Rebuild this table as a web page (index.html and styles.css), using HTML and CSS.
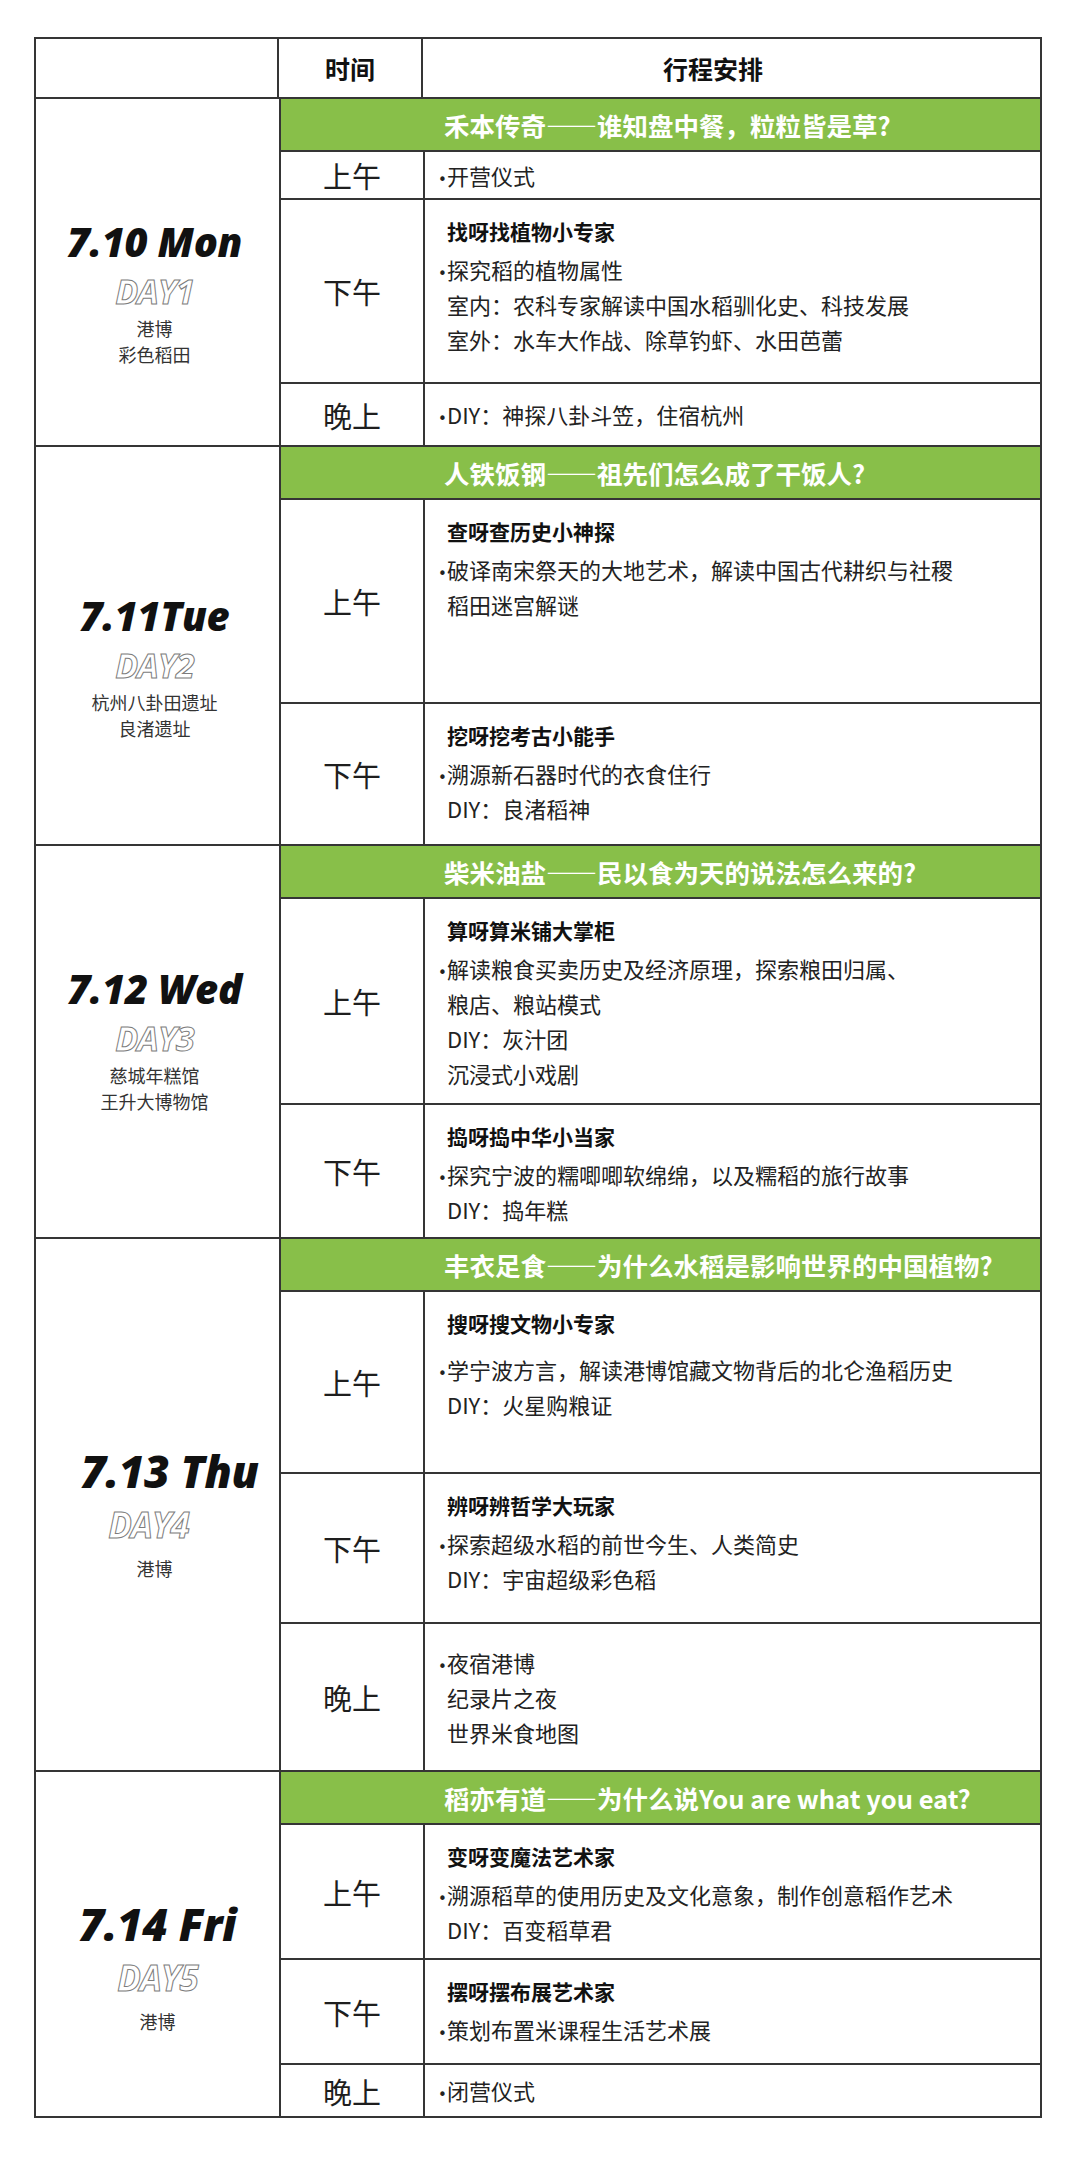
FILE: index.html
```html
<!DOCTYPE html>
<html lang="zh-CN">
<head>
<meta charset="utf-8">
<title>行程安排</title>
<link rel="stylesheet" href="styles.css">
</head>
<body>
<div class="table">
  <div class="header">
    <div class="hc1"></div>
    <div class="hc2">时间</div>
    <div class="hc3">行程安排</div>
  </div>

  <section class="day day1">
    <div class="day-label">
      <div class="date">7.10 Mon</div>
      <div class="dayno">DAY1</div>
      <div class="loc">港博</div>
      <div class="loc">彩色稻田</div>
    </div>
    <div class="day-body">
      <div class="theme">禾本传奇——谁知盘中餐，粒粒皆是草?</div>
      <div class="session h48">
        <div class="time">上午</div>
        <div class="content center"><p class="line b"><span class="dot">•</span>开营仪式</p></div>
      </div>
      <div class="session h184">
        <div class="time">下午</div>
        <div class="content">
          <p class="title">找呀找植物小专家</p>
          <p class="line b"><span class="dot">•</span>探究稻的植物属性</p>
          <p class="line">室内：农科专家解读中国水稻驯化史、科技发展</p>
          <p class="line">室外：水车大作战、除草钓虾、水田芭蕾</p>
        </div>
      </div>
      <div class="session h63">
        <div class="time">晚上</div>
        <div class="content center"><p class="line b"><span class="dot">•</span>DIY：神探八卦斗笠，住宿杭州</p></div>
      </div>
    </div>
  </section>

  <section class="day day2">
    <div class="day-label">
      <div class="date">7.11Tue</div>
      <div class="dayno">DAY2</div>
      <div class="loc">杭州八卦田遗址</div>
      <div class="loc">良渚遗址</div>
    </div>
    <div class="day-body">
      <div class="theme">人铁饭钢——祖先们怎么成了干饭人?</div>
      <div class="session h204">
        <div class="time">上午</div>
        <div class="content">
          <p class="title">查呀查历史小神探</p>
          <p class="line b"><span class="dot">•</span>破译南宋祭天的大地艺术，解读中国古代耕织与社稷</p>
          <p class="line">稻田迷宫解谜</p>
        </div>
      </div>
      <div class="session h142">
        <div class="time">下午</div>
        <div class="content">
          <p class="title">挖呀挖考古小能手</p>
          <p class="line b"><span class="dot">•</span>溯源新石器时代的衣食住行</p>
          <p class="line">DIY：良渚稻神</p>
        </div>
      </div>
    </div>
  </section>

  <section class="day day3">
    <div class="day-label">
      <div class="date">7.12 Wed</div>
      <div class="dayno">DAY3</div>
      <div class="loc">慈城年糕馆</div>
      <div class="loc">王升大博物馆</div>
    </div>
    <div class="day-body">
      <div class="theme">柴米油盐——民以食为天的说法怎么来的?</div>
      <div class="session h206">
        <div class="time">上午</div>
        <div class="content">
          <p class="title">算呀算米铺大掌柜</p>
          <p class="line b"><span class="dot">•</span>解读粮食买卖历史及经济原理，探索粮田归属、</p>
          <p class="line">粮店、粮站模式</p>
          <p class="line">DIY：灰汁团</p>
          <p class="line">沉浸式小戏剧</p>
        </div>
      </div>
      <div class="session h134">
        <div class="time">下午</div>
        <div class="content">
          <p class="title">捣呀捣中华小当家</p>
          <p class="line b"><span class="dot">•</span>探究宁波的糯唧唧软绵绵，以及糯稻的旅行故事</p>
          <p class="line">DIY：捣年糕</p>
        </div>
      </div>
    </div>
  </section>

  <section class="day day4">
    <div class="day-label">
      <div class="date big">7.13 Thu</div>
      <div class="dayno large">DAY4</div>
      <div class="loc">港博</div>
    </div>
    <div class="day-body">
      <div class="theme">丰衣足食——为什么水稻是影响世界的中国植物?</div>
      <div class="session h182">
        <div class="time">上午</div>
        <div class="content">
          <p class="title gap">搜呀搜文物小专家</p>
          <p class="line b"><span class="dot">•</span>学宁波方言，解读港博馆藏文物背后的北仑渔稻历史</p>
          <p class="line">DIY：火星购粮证</p>
        </div>
      </div>
      <div class="session h150">
        <div class="time">下午</div>
        <div class="content">
          <p class="title">辨呀辨哲学大玩家</p>
          <p class="line b"><span class="dot">•</span>探索超级水稻的前世今生、人类简史</p>
          <p class="line">DIY：宇宙超级彩色稻</p>
        </div>
      </div>
      <div class="session h148">
        <div class="time">晚上</div>
        <div class="content center">
          <p class="line b"><span class="dot">•</span>夜宿港博</p>
          <p class="line">纪录片之夜</p>
          <p class="line">世界米食地图</p>
        </div>
      </div>
    </div>
  </section>

  <section class="day day5">
    <div class="day-label">
      <div class="date big">7.14 Fri</div>
      <div class="dayno large">DAY5</div>
      <div class="loc">港博</div>
    </div>
    <div class="day-body">
      <div class="theme">稻亦有道——为什么说You are what you eat?</div>
      <div class="session h135">
        <div class="time">上午</div>
        <div class="content">
          <p class="title">变呀变魔法艺术家</p>
          <p class="line b"><span class="dot">•</span>溯源稻草的使用历史及文化意象，制作创意稻作艺术</p>
          <p class="line">DIY：百变稻草君</p>
        </div>
      </div>
      <div class="session h105">
        <div class="time">下午</div>
        <div class="content">
          <p class="title">摆呀摆布展艺术家</p>
          <p class="line b"><span class="dot">•</span>策划布置米课程生活艺术展</p>
        </div>
      </div>
      <div class="session h53">
        <div class="time">晚上</div>
        <div class="content center"><p class="line b"><span class="dot">•</span>闭营仪式</p></div>
      </div>
    </div>
  </section>
</div>
</body>
</html>
```

FILE: styles.css
```css
* { box-sizing: border-box; }

html, body {
  margin: 0;
  padding: 0;
  background: #ffffff;
}

body {
  font-family: "Noto Sans CJK SC", "Noto Sans", sans-serif;
  color: #222;
}

p { margin: 0; }

.table {
  width: 1008px;
  margin: 37px 0 0 34px;
  border: 2px solid #353535;
}

.header {
  display: flex;
  height: 58px;
  font-weight: 700;
  font-size: 25px;
  color: #111;
}

.hc1 {
  width: 243px;
  border-right: 2px solid #353535;
}

.hc2 {
  width: 144px;
  border-right: 2px solid #353535;
  display: flex;
  align-items: center;
  justify-content: center;
}

.hc3 {
  flex: 1;
  display: flex;
  align-items: center;
  justify-content: center;
  padding-right: 37px;
}

.day {
  display: flex;
  border-top: 2px solid #353535;
}

.day-label {
  width: 245px;
  border-right: 2px solid #353535;
  display: flex;
  flex-direction: column;
  align-items: center;
  justify-content: center;
  padding-top: 40px;
  padding-right: 6px;
}

.day3 .day-label { padding-top: 0; padding-bottom: 6px; }
.day4 .day-label { padding-top: 14px; }
.day5 .day-label { padding-top: 40px; padding-left: 6px; }

.date {
  font-family: "Open Sans", "DejaVu Sans", sans-serif;
  font-style: italic;
  font-weight: 800;
  font-size: 40px;
  line-height: 50px;
  color: #111;
  letter-spacing: -0.3px;
  white-space: nowrap;
}

.date.big { font-size: 44px; line-height: 58px; }
.day4 .date { margin-left: 30px; }

.dayno {
  font-family: "Open Sans", "DejaVu Sans", sans-serif;
  font-style: italic;
  font-weight: 700;
  font-size: 34px;
  line-height: 48px;
  color: #ffffff;
  -webkit-text-stroke: 1px #7c7c7c;
  letter-spacing: -1px;
}

.dayno.large { font-size: 35px; line-height: 50px; margin-bottom: 5px; }
.day4 .dayno { margin-right: 12px; }

.loc {
  font-size: 18px;
  line-height: 26px;
  color: #333;
}

.day-body {
  flex: 1;
  display: flex;
  flex-direction: column;
}

.theme {
  height: 51px;
  background: #88bf49;
  color: #ffffff;
  font-weight: 700;
  font-size: 25.5px;
  display: flex;
  align-items: center;
  padding-left: 163px;
  white-space: nowrap;
}

.session {
  display: flex;
  border-top: 2px solid #353535;
}

.h48 { height: 48px; }
.h53 { height: 53px; }
.h63 { height: 63px; }
.h105 { height: 105px; }
.h134 { height: 134px; }
.h135 { height: 135px; }
.h142 { height: 142px; }
.h148 { height: 148px; }
.h150 { height: 150px; }
.h182 { height: 182px; }
.h184 { height: 184px; }
.h204 { height: 204px; }
.h206 { height: 206px; }

.time {
  width: 144px;
  flex: none;
  border-right: 2px solid #353535;
  display: flex;
  align-items: center;
  justify-content: center;
  font-size: 29px;
  color: #1e1e1e;
}

.content {
  flex: 1;
  padding: 16px 12px 0 13px;
}

.content.center {
  display: flex;
  flex-direction: column;
  justify-content: center;
  padding-top: 0;
}

.title {
  font-size: 21px;
  font-weight: 700;
  line-height: 30px;
  margin-bottom: 6px;
  padding-left: 9px;
  color: #111;
}

.title.gap { margin-bottom: 14px; }

.line {
  font-size: 22px;
  line-height: 35px;
  color: #222;
  white-space: nowrap;
  padding-left: 9px;
}

.line.b { padding-left: 0; }

.dot {
  display: inline-block;
  width: 9px;
  font-family: "DejaVu Sans", sans-serif;
  font-size: 15px;
  line-height: 1;
  vertical-align: 0;
}
```
